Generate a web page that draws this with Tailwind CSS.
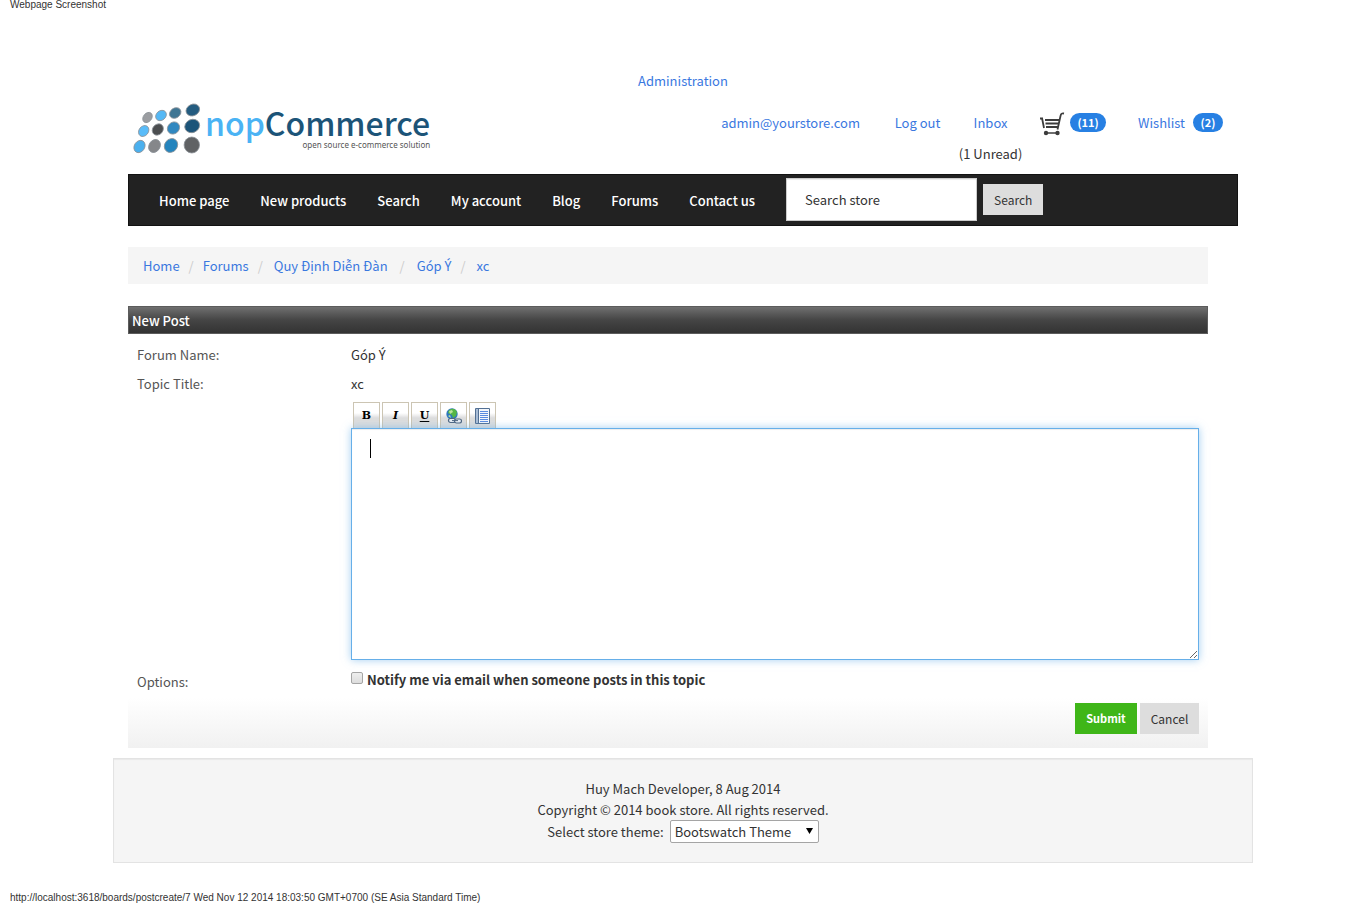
<!DOCTYPE html>
<html lang="en">
<head>
<meta charset="utf-8">
<title>Book store - New Post</title>
<script src="https://cdn.jsdelivr.net/npm/@tailwindcss/browser@4"></script>
</head>
<body class="bg-white font-['Noto_Sans_CJK_SC','Noto_Sans',sans-serif] text-[13px] leading-[21px] text-[#333]">
<p class="h-[70px] pl-[10px] font-['Liberation_Sans',sans-serif] text-[10px] leading-[10px]">Webpage Screenshot</p>

<div class="pl-[17px]">
<div class="mx-auto max-w-[1140px]">
  <header class="px-[15px]">
    <div class="text-center"><a href="#" class="text-[#3a78df]">Administration</a></div>
    <div class="flex h-[83px] items-start justify-between">
      <a href="#" aria-label="nopCommerce" class="flex items-start pt-[11px] pl-[4px]">
        <svg class="h-[54px] w-[73px] shrink-0" viewBox="0 0 72 54">
          <g stroke="#8b9298" stroke-width=".8">
            <ellipse cx="15" cy="15.500" rx="4.200" ry="5.600" transform="rotate(38 15 15.500)" fill="#9b9da1"/>
            <ellipse cx="28.500" cy="13.500" rx="4.700" ry="5.800" transform="rotate(50 28.500 13.500)" fill="#55b8f5"/>
            <ellipse cx="42.700" cy="11" rx="4.900" ry="6.100" transform="rotate(54 42.700 11)" fill="#3f7593"/>
            <ellipse cx="60.300" cy="8" rx="5.700" ry="7" transform="rotate(64 60.300 8)" fill="#245c80"/>
            <ellipse cx="11.200" cy="29" rx="4.700" ry="5.900" transform="rotate(38 11.200 29)" fill="#5abcf9"/>
            <ellipse cx="25.300" cy="27.500" rx="5.100" ry="6.100" transform="rotate(42 25.300 27.500)" fill="#4c4e50"/>
            <ellipse cx="41" cy="26" rx="5.700" ry="6.500" transform="rotate(45 41 26)" fill="#3188c0"/>
            <ellipse cx="59.700" cy="24" rx="6.500" ry="7.600" transform="rotate(65 59.700 24)" fill="#1c5479"/>
            <ellipse cx="7" cy="44.500" rx="5.200" ry="6.500" transform="rotate(32 7 44.500)" fill="#4bb0ee"/>
            <ellipse cx="22" cy="44" rx="5.500" ry="6.900" transform="rotate(32 22 44)" fill="#85878a"/>
            <ellipse cx="38.500" cy="43.500" rx="6.300" ry="7.300" transform="rotate(38 38.500 43.500)" fill="#2484bd"/>
            <ellipse cx="59.300" cy="43" rx="7.700" ry="8" fill="#606264"/>
          </g>
        </svg>
        <span class="flex flex-col items-end">
          <span class="text-[32px] leading-[41px] font-medium text-[#1c5478]"><span class="text-[#4ab3f4]">nop</span>Commerce</span>
          <span class="font-['Noto_Sans',sans-serif] text-[8px] leading-[4px] text-[#555]">open source e-commerce solution</span>
        </span>
      </a>
      <ul class="flex gap-[2px] pt-[21px] text-center">
        <li class="w-[173px]"><a href="#" class="text-[#3a78df]">admin@yourstore.com</a></li>
        <li class="w-[77px]"><a href="#" class="text-[#3a78df]">Log out</a></li>
        <li class="flex w-[65px] flex-col gap-[10px]"><a href="#" class="text-[#3a78df]">Inbox</a><span>(1 Unread)</span></li>
        <li class="px-[15px]"><a href="#" aria-label="Shopping cart" class="flex gap-[5px]">
          <svg class="h-[24px] w-[25px]" viewBox="0 0 25 24" fill="none" stroke="#3c3c3c">
            <path d="M0 6.500h3M24 1.500c-3-.5-3 .5-3.500 2.500L17.500 17.500M2 6l2 10" stroke-width="1.800"/>
            <path d="M5 8h15M5.500 11.500h13.500M6 15h12" stroke-width="2"/><path d="M5 21h13" stroke-width="1.500"/>
            <circle cx="6" cy="21" r="2.200" fill="#3c3c3c" stroke="none"/><circle cx="17.500" cy="21" r="2.200" fill="#3c3c3c" stroke="none"/>
          </svg>
          <span class="mt-px h-[19px] w-[36px] rounded-full bg-[#2780e3] text-[11px] leading-[19px] font-bold text-white">(11)</span></a></li>
        <li class="px-[15px]"><a href="#" class="flex gap-[8px] text-[#3a78df]">Wishlist <span class="mt-px h-[19px] w-[30px] rounded-full bg-[#2780e3] text-[11px] leading-[19px] font-bold text-white">(2)</span></a></li>
      </ul>
    </div>
    <nav class="flex h-[52px] items-center gap-px border border-[#121212] bg-[#222] pl-[15px] font-medium text-white">
      <a href="#" class="px-[15px]">Home page</a>
      <a href="#" class="px-[15px]">New products</a>
      <a href="#" class="px-[15px]">Search</a>
      <a href="#" class="px-[15px]">My account</a>
      <a href="#" class="px-[15px]">Blog</a>
      <a href="#" class="px-[15px]">Forums</a>
      <a href="#" class="px-[15px]">Contact us</a>
      <form class="ml-[15px] flex items-center gap-[6px] pb-[2px] font-normal">
        <input type="text" aria-label="Search store" value="Search store" class="h-[43px] w-[191px] border border-[#ccc] bg-white px-[18px] text-[#333] shadow-[inset_0_1px_1px_rgba(0,0,0,0.075)]">
        <button type="button" class="h-[31px] bg-[#ddd] px-[11px] text-[12px] text-[#333]">Search</button>
      </form>
    </nav>
  </header>

  <main class="pr-[45px] pl-[15px]">
    <ol class="mt-[21px] flex h-[37px] items-center bg-[#f5f5f5] pl-[15px] text-[#3a78df]">
      <li><a href="#">Home</a><span class="px-[9px] text-[#ccc]">/</span></li>
      <li><a href="#">Forums</a><span class="pr-[11px] pl-[9px] text-[#ccc]">/</span></li>
      <li><a href="#">Quy Định Diễn Đàn</a><span class="px-[12px] text-[#ccc]">/</span></li>
      <li><a href="#">Góp Ý</a><span class="pr-[11px] pl-[9px] text-[#ccc]">/</span></li>
      <li><a href="#">xc</a></li>
    </ol>
    <h1 class="mt-[22px] h-[28px] border border-[#5c5c5c] bg-linear-to-b from-[#707070] via-[#454545] via-50% to-[#333] pl-[3px] leading-[28px] font-medium text-white">New Post</h1>
    <form>
      <div class="grid grid-cols-[214px_1fr] gap-y-[8px] px-[9px] pt-[10px]">
        <span class="text-[#555]">Forum Name:</span><span>Góp Ý</span>
        <span class="text-[#555]">Topic Title:</span><span>xc</span>
        <div class="col-start-2">
          <div class="flex gap-[2px] pl-[2px] font-['DejaVu_Serif',serif] text-[11px] font-bold text-black">
            <button type="button" aria-label="Bold" class="h-[26px] w-[27px] border border-b-0 border-[#ccc5b3] bg-linear-to-b from-white from-40% to-[#ddd] to-60%">B</button>
            <button type="button" aria-label="Italic" class="h-[26px] w-[27px] border border-b-0 border-[#ccc5b3] bg-linear-to-b from-white from-40% to-[#ddd] to-60% italic">I</button>
            <button type="button" aria-label="Underline" class="h-[26px] w-[27px] border border-b-0 border-[#ccc5b3] bg-linear-to-b from-white from-40% to-[#ddd] to-60% underline underline-offset-2">U</button>
            <button type="button" aria-label="Insert link" class="flex h-[26px] w-[27px] items-center justify-center border border-b-0 border-[#ccc5b3] bg-linear-to-b from-white from-40% to-[#ddd] to-60%">
              <svg class="size-[16px]" viewBox="0 0 16 16"><circle cx="6" cy="6" r="5.700" fill="#2f78bd"/><path d="M5 1q4-1 6 3l-1 4-3 2-1-3-4-2q0-3 3-4" fill="#55b646"/><path d="M3 3l3-1 1 2-3 2zM2 8l2-1 1 3z" fill="#bce39c"/><g fill="#e9eef4" stroke="#4e6580" stroke-width="1.200"><rect x="2.500" y="10.500" width="7" height="4" rx="2"/><rect x="8.500" y="11" width="7" height="4" rx="2"/></g><path d="M6 12.600h6" stroke="#4e6580"/></svg>
            </button>
            <button type="button" aria-label="Insert code" class="flex h-[26px] w-[27px] items-center justify-center border border-b-0 border-[#ccc5b3] bg-linear-to-b from-white from-40% to-[#ddd] to-60%">
              <svg class="size-[16px]" viewBox="0 0 16 16"><path d="M.5.500h14v15H.500z" fill="#f4f7fc" stroke="#537093"/><path d="M1 1h2v14H1z" fill="#a9bdd6"/><path d="M3.500 1v14" stroke="#537093"/><path d="M5 3.500h8M5 5.500h8M5 7.500h8M5 9.500h8M5 11.500h8M5 13.500h8" stroke="#5a8be0"/></svg>
            </button>
          </div>
          <div class="relative">
            <textarea aria-label="Post text" class="block h-[232px] w-full border border-[#66afe9] px-[18px] py-[10px] shadow-[inset_0_1px_1px_rgba(0,0,0,0.075),0_0_8px_rgba(102,175,233,0.6)] outline-none"></textarea>
            <span aria-hidden="true" class="absolute top-[11px] left-[19px] h-[19px] w-px bg-black"></span>
          </div>
        </div>
        <span class="pt-[3px] text-[#555]">Options:</span>
        <label class="flex gap-[4px] pt-px font-bold"><input type="checkbox" class="mt-[3px] size-[12px] appearance-none rounded-[2px] border border-[#a5a5a5] bg-linear-to-b from-[#eee] to-[#ddd]">Notify me via email when someone posts in this topic</label>
      </div>
      <div class="mt-[6px] flex h-[50px] justify-end gap-[3px] bg-linear-to-b from-white to-[#f1f1f1] pt-[5px] pr-[9px] text-[12px]">
        <button type="button" class="h-[31px] w-[62px] bg-[#3fb618] text-[11px] font-bold text-white">Submit</button>
        <button type="button" class="h-[31px] w-[59px] bg-[#ddd] text-[#333]">Cancel</button>
      </div>
    </form>
  </main>

  <footer class="mt-[10px] h-[105px] border border-[#e3e3e3] bg-[#f5f5f5] pt-[19px] text-center shadow-[inset_0_1px_1px_rgba(0,0,0,0.05)]">
    <p>Huy Mach Developer, 8 Aug 2014</p>
    <p>Copyright © 2014 book store. All rights reserved.</p>
    <div class="flex items-center justify-center gap-[6px]">
      <label for="theme">Select store theme:</label>
      <span class="relative">
        <select id="theme" class="block h-[23px] w-[149px] appearance-none rounded-[2px] border border-[#a5a5a5] bg-white pl-[4px] leading-[21px]"><option>Bootswatch Theme</option></select>
        <svg aria-hidden="true" class="pointer-events-none absolute top-[8px] right-[6px] h-[6px] w-[7px]" viewBox="0 0 7 6"><path d="M0 0h7L3.500 6z" fill="#000"/></svg>
      </span>
    </div>
  </footer>
</div>
</div>
<p class="mt-[30px] pl-[10px] font-['Liberation_Sans',sans-serif] text-[10px] leading-[10px]">http://localhost:3618/boards/postcreate/7 Wed Nov 12 2014 18:03:50 GMT+0700 (SE Asia Standard Time)</p>
</body>
</html>
